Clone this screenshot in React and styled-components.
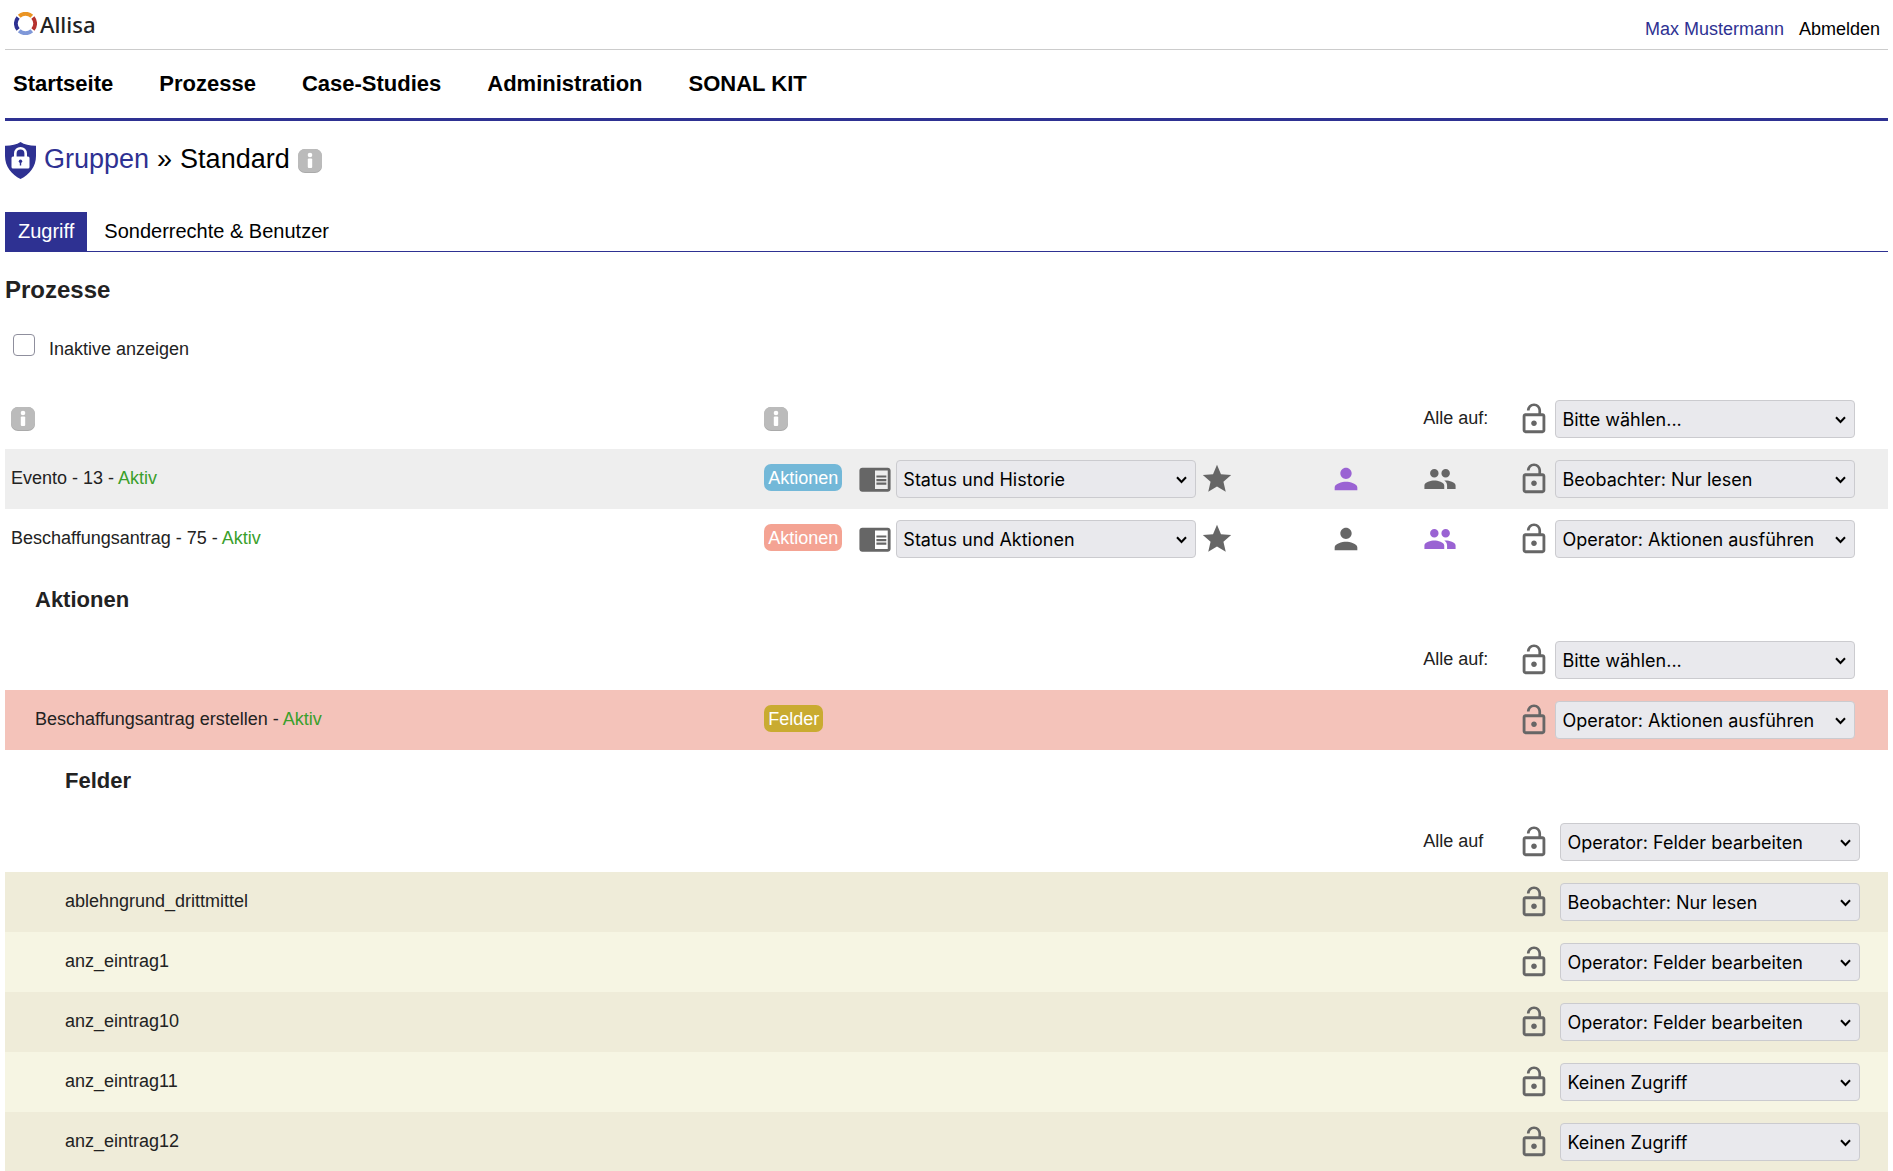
import { useState } from "react";
import styled, { createGlobalStyle } from "styled-components";
import {
  MdChromeReaderMode,
  MdGroup,
  MdLockOpen,
  MdPerson,
  MdStar,
} from "react-icons/md";

const GlobalStyles = createGlobalStyle`
  * {
    box-sizing: border-box;
  }

  body {
    margin: 0;
    background-color: #fff;
    color: #222;
    font-family: "Liberation Sans", Arial, Helvetica, sans-serif;
    font-size: 18px;
    line-height: 20px;
  }

  a {
    color: inherit;
    text-decoration: none;
  }
`;

const Page = styled.div`
  padding: 0 5px;
`;

const Header = styled.header`
  display: flex;
  justify-content: space-between;
  align-items: center;
  height: 50px;
  padding: 0 8px 0 9px;
  border-bottom: 1px solid #ccc;
`;

const Logo = styled.a`
  display: flex;
  align-items: center;
  gap: 3px;
  padding-bottom: 2px;
  font-family: "Noto Sans", sans-serif;
  font-size: 22px;
  font-weight: 500;
`;

const UserLinks = styled.div`
  display: flex;
  gap: 15px;
  padding-top: 8px;
  color: #000;
`;

const UserName = styled.a`
  && {
    color: #2e3192;
  }
`;

const MainNav = styled.nav`
  display: flex;
  gap: 46px;
  padding: 21px 8px;
  border-bottom: 3px solid #2e3192;
  color: #000;
  font-size: 22px;
  font-weight: 700;
  line-height: 26px;
`;

const Title = styled.h1`
  display: flex;
  align-items: center;
  gap: 8px;
  margin: 20px 0 32px;
  color: #000;
  font-size: 27px;
  font-weight: 400;
  line-height: 39px;

  & a {
    color: #2e3192;
  }

  & a,
  & span {
    padding-bottom: 2px;
    line-height: 37px;
  }
`;

const Tabs = styled.div`
  display: flex;
  gap: 4px;
  border-bottom: 1px solid #2e3192;
`;

const Tab = styled.button`
  height: 39px;
  padding: 0 13px;
  border: none;
  background-color: ${(props) => (props.$active ? "#2e3192" : "transparent")};
  color: ${(props) => (props.$active ? "#fff" : "#000")};
  font-family: inherit;
  font-size: 20px;
`;

const Heading = styled.h2`
  margin: 24px 0 31px;
  font-size: 24px;
  line-height: 28px;
`;

const InactiveFilter = styled.label`
  display: flex;
  align-items: flex-end;
  gap: 14px;
  height: 24px;
  margin-bottom: 30px;
  padding: 0 8px;
`;

const Checkbox = styled.input`
  appearance: none;
  width: 22px;
  height: 22px;
  margin: 0 0 3px;
  border: 1px solid #8f8f9d;
  border-radius: 4px;
  background-color: #fff;

  &:checked {
    background-color: #2e3192;
  }
`;

const Table = styled.table`
  width: 100%;
  table-layout: fixed;
  border-collapse: collapse;
`;

const Col = styled.col`
  width: ${(props) => props.$width};
`;

const rowColors = {
  grey: "#eee",
  red: "#f4c3ba",
  sand: "#efecd9",
  cream: "#f6f5e3",
};

const Row = styled.tr`
  height: 60px;
  background-color: ${(props) => rowColors[props.$color] || "transparent"};
`;

const Cell = styled.td`
  padding: 0 6px;
`;

const indents = [6, 30, 60];

const NameCell = styled(Cell)`
  padding: 0 6px 2px ${(props) => indents[props.$level || 0]}px;
`;

const SectionCell = styled.th`
  height: ${(props) => (props.$level === 2 ? 62 : 61)}px;
  padding: 0 6px 0 ${(props) => indents[props.$level]}px;
  font-size: 22px;
  text-align: left;
`;

const Active = styled.span`
  color: #3a9f2b;
`;

const chipColors = {
  blue: "#73b8d8",
  red: "#f4a393",
  gold: "#c9ab31",
};

const Chip = styled.button`
  display: block;
  height: 27px;
  margin-bottom: 3px;
  padding: 0 4px;
  border: none;
  border-radius: 7px;
  background-color: ${(props) => chipColors[props.$color]};
  color: #fff;
  font: inherit;
`;

const Controls = styled.div`
  display: flex;
  align-items: center;
  gap: ${(props) => (props.$wide ? 9 : 4)}px;
  color: #666;

  & > svg {
    flex-shrink: 0;
  }
`;

const IconButton = styled.button`
  display: block;
  padding: 0;
  border: none;
  background: none;
  color: ${(props) => (props.$active ? "#9a63d3" : "#666")};

  & svg {
    display: block;
  }
`;

const AllLabel = styled.label`
  display: block;
  padding-bottom: 2px;
`;

const SelectBox = styled.div`
  position: relative;
  width: 300px;

  & svg {
    position: absolute;
    top: 16px;
    right: 9px;
    pointer-events: none;
  }
`;

const StyledSelect = styled.select`
  appearance: none;
  display: block;
  width: 100%;
  height: 38px;
  padding: 0 30px 0 6px;
  border: 1px solid #cbcbcf;
  border-radius: 4px;
  background-color: #e9e9ed;
  color: #000;
  font-family: Inter, sans-serif;
  font-size: 18px;
`;

function Select({ id, label, value }) {
  return (
    <SelectBox>
      <StyledSelect id={id} aria-label={label} defaultValue={value}>
        <option>{value}</option>
      </StyledSelect>
      <svg width="11" height="8" viewBox="0 0 11 8" fill="none">
        <path d="M1 1.2l4.5 4.8L10 1.2" stroke="#000" strokeWidth="2" />
      </svg>
    </SelectBox>
  );
}

function InfoIcon() {
  return (
    <svg width="24" height="24" viewBox="0 0 24 24">
      <rect width="24" height="24" rx="7" fill="#aaa" />
      <rect width="24" height="23" rx="7" fill="#bbb" />
      <circle cx="12" cy="6" r="2.3" fill="#fff" />
      <rect x="9.8" y="9.6" width="4.4" height="9.4" rx="1" fill="#fff" />
    </svg>
  );
}

function ShieldIcon() {
  return (
    <svg width="31" height="37" viewBox="0 0 31 37">
      <path
        d="M15.5 0C11.5 2.6 6 3.8 0 3.7V14c0 10.5 6.5 18.5 15.5 23C24.5 32.5 31 24.5 31 14V3.7C25 3.8 19.5 2.6 15.5 0z"
        fill="#2e3192"
      />
      <path
        d="M10.3 15v-3.6a5.2 5.2 0 0 1 10.4 0V15"
        fill="none"
        stroke="#fff"
        strokeWidth="2.6"
      />
      <rect x="6.5" y="14.5" width="18" height="12" rx="1.5" fill="#fff" />
      <circle cx="15.5" cy="19.3" r="1.7" fill="#2e3192" />
      <path d="M14.8 19.5h1.4v4h-1.4z" fill="#2e3192" />
    </svg>
  );
}

function LogoIcon() {
  return (
    <svg width="23" height="23" viewBox="0 0 23 23" fill="none" strokeWidth="4">
      <path d="M5.2 4.2a9.5 9.5 0 0 1 12.6 0" stroke="#ea9423" />
      <path d="M18.9 5.5a9.5 9.5 0 0 1 0 12" stroke="#b5322f" />
      <path d="M17.8 18.8a9.5 9.5 0 0 1-12.6 0" stroke="#7f98d8" />
      <path d="M4.1 17.5a9.5 9.5 0 0 1 0-12" stroke="#2e3192" />
    </svg>
  );
}

const processes = [
  {
    name: "Evento - 13",
    color: "grey",
    chip: "blue",
    view: "Status und Historie",
    selected: "person",
    access: "Beobachter: Nur lesen",
  },
  {
    name: "Beschaffungsantrag - 75",
    chip: "red",
    view: "Status und Aktionen",
    selected: "group",
    access: "Operator: Aktionen ausführen",
  },
];

const fields = [
  { name: "ablehngrund_drittmittel", access: "Beobachter: Nur lesen" },
  { name: "anz_eintrag1", access: "Operator: Felder bearbeiten" },
  { name: "anz_eintrag10", access: "Operator: Felder bearbeiten" },
  { name: "anz_eintrag11", access: "Keinen Zugriff" },
  { name: "anz_eintrag12", access: "Keinen Zugriff" },
];

function AccessCell({ wide, ...selectProps }) {
  return (
    <Cell>
      <Controls $wide={wide}>
        <MdLockOpen size={34} />
        <Select {...selectProps} />
      </Controls>
    </Cell>
  );
}

function InfoCell({ show }) {
  return <Cell>{show && <Controls><InfoIcon /></Controls>}</Cell>;
}

function AllRow({ id, label, value, wide, info }) {
  return (
    <Row>
      <InfoCell show={info} />
      <InfoCell show={info} />
      <Cell colSpan={2} />
      <Cell>
        <AllLabel htmlFor={id}>{label}</AllLabel>
      </Cell>
      <AccessCell id={id} value={value} wide={wide} />
    </Row>
  );
}

function ProcessRow({ process }) {
  const { name, color, chip, view, access } = process;
  const [selected, setSelected] = useState(process.selected);

  return (
    <Row $color={color}>
      <NameCell>
        {name} - <Active>Aktiv</Active>
      </NameCell>
      <Cell>
        <Chip $color={chip}>Aktionen</Chip>
      </Cell>
      <Cell>
        <Controls>
          <MdChromeReaderMode size={34} />
          <Select label={`Ansicht ${name}`} value={view} />
          <MdStar size={34} />
        </Controls>
      </Cell>
      <Cell>
        <IconButton
          aria-label="Person"
          $active={selected === "person"}
          onClick={() => setSelected("person")}
        >
          <MdPerson size={34} />
        </IconButton>
      </Cell>
      <Cell>
        <IconButton
          aria-label="Gruppe"
          $active={selected === "group"}
          onClick={() => setSelected("group")}
        >
          <MdGroup size={34} />
        </IconButton>
      </Cell>
      <AccessCell label={`Zugriff ${name}`} value={access} />
    </Row>
  );
}

function AccessTable() {
  return (
    <Table>
      <colgroup>
        <Col $width="40%" />
        <Col $width="5%" />
        <Col $width="25%" />
        <Col $width="5%" />
        <Col $width="5%" />
        <Col $width="20%" />
      </colgroup>
      <tbody>
        <AllRow id="all-processes" label="Alle auf:" value="Bitte wählen..." info />
        {processes.map((process) => (
          <ProcessRow key={process.name} process={process} />
        ))}

        <tr>
          <SectionCell colSpan={6} $level={1}>
            Aktionen
          </SectionCell>
        </tr>
        <AllRow id="all-actions" label="Alle auf:" value="Bitte wählen..." />
        <Row $color="red">
          <NameCell $level={1}>
            Beschaffungsantrag erstellen - <Active>Aktiv</Active>
          </NameCell>
          <Cell>
            <Chip $color="gold">Felder</Chip>
          </Cell>
          <Cell colSpan={3} />
          <AccessCell
            label="Zugriff Beschaffungsantrag erstellen"
            value="Operator: Aktionen ausführen"
          />
        </Row>

        <tr>
          <SectionCell colSpan={6} $level={2}>
            Felder
          </SectionCell>
        </tr>
        <AllRow
          id="all-fields"
          label="Alle auf"
          value="Operator: Felder bearbeiten"
          wide
        />
        {fields.map((field, i) => (
          <Row key={field.name} $color={i % 2 ? "cream" : "sand"}>
            <NameCell $level={2}>{field.name}</NameCell>
            <Cell colSpan={4} />
            <AccessCell
              label={`Zugriff ${field.name}`}
              value={field.access}
              wide
            />
          </Row>
        ))}
      </tbody>
    </Table>
  );
}

function App() {
  const [showInactive, setShowInactive] = useState(false);

  return (
    <>
      <GlobalStyles />
      <Page>
        <Header>
          <Logo href="#">
            <LogoIcon />
            Allisa
          </Logo>
          <UserLinks>
            <UserName href="#">Max Mustermann</UserName>
            <a href="#">Abmelden</a>
          </UserLinks>
        </Header>
        <MainNav>
          <a href="#">Startseite</a>
          <a href="#">Prozesse</a>
          <a href="#">Case-Studies</a>
          <a href="#">Administration</a>
          <a href="#">SONAL KIT</a>
        </MainNav>

        <main>
          <Title>
            <ShieldIcon />
            <a href="#">Gruppen</a>
            <span>»</span>
            <span>Standard</span>
            <InfoIcon />
          </Title>
          <Tabs>
            <Tab $active>Zugriff</Tab>
            <Tab>Sonderrechte &amp; Benutzer</Tab>
          </Tabs>

          <Heading>Prozesse</Heading>
          <InactiveFilter>
            <Checkbox
              type="checkbox"
              checked={showInactive}
              onChange={() => setShowInactive((show) => !show)}
            />
            Inaktive anzeigen
          </InactiveFilter>
          <AccessTable />
        </main>
      </Page>
    </>
  );
}

export default App;
